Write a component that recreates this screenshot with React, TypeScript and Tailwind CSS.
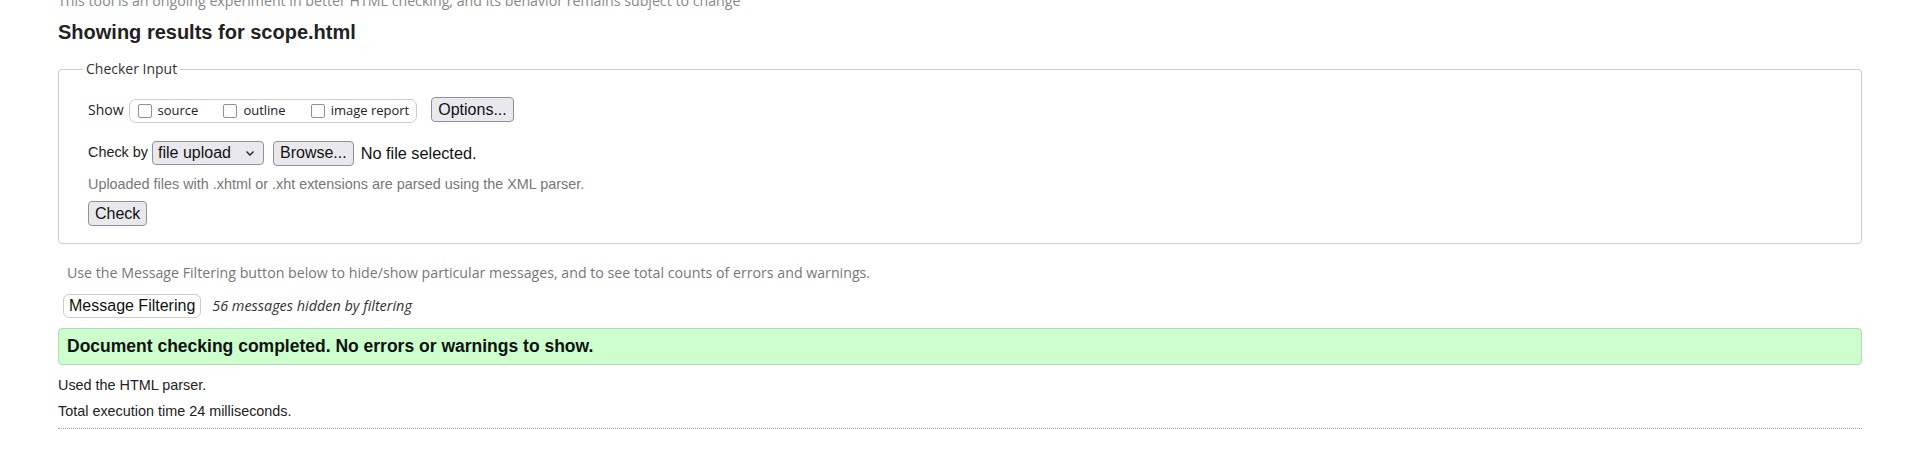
import React from 'react';

const sans = "font-['Liberation_Sans',Arial,sans-serif]";
const ui = "font-['Open_Sans','Noto_Sans',sans-serif]";

function Chevron() {
  return (
    <svg width="10" height="10" viewBox="0 0 10 10" className="ml-[14px]">
      <path d="M1.5 3.5 L5 7 L8.5 3.5" fill="none" stroke="#222" strokeWidth="1.4" />
    </svg>
  );
}

function Box({ label }: { label: string }) {
  return (
    <label className="flex items-center">
      <input
        type="checkbox"
        className="h-[14px] w-[14px] appearance-none rounded-[2px] border border-[#8f8f9d] bg-white"
      />
      <span className={`ml-[6px] text-[13px] text-[#222] ${ui}`}>{label}</span>
    </label>
  );
}

const ffButton =
  'h-[25px] rounded-[4px] border border-[#8f8f9d] bg-[#e9e9ed] px-[6px] text-[16px] leading-none text-[#111]';

export default function App() {
  return (
    <div className={`h-[456px] w-[1920px] overflow-hidden bg-white px-[58px] text-[#222] ${sans}`}>
      <p className={`mt-[-9px] h-[20px] whitespace-nowrap text-[14.2px] leading-[20px] text-[#888] ${ui}`}>
        This tool is an ongoing experiment in better HTML checking, and its behavior remains subject to change
      </p>

      <h2 className="mt-[9px] text-[20px] font-bold leading-[24px] text-[#222]">Showing results for scope.html</h2>

      {/* Checker Input */}
      <fieldset className="mt-[15px] rounded-[4px] border border-[#ccc] pb-[17px] pl-[29px]">
        <legend className={`ml-[-5px] px-[3px] text-[14px] leading-[20px] text-[#333] ${ui}`}>Checker Input</legend>

        <div className="mt-[17px] flex h-[27px] items-center">
          <span className={`text-[14px] text-[#222] ${ui}`}>Show</span>
          <div className="ml-[5px] mt-[2px] flex h-[24px] items-center gap-[25px] rounded-[7px] border border-[#ccc] pl-[8px] pr-[7px]">
            <Box label="source" />
            <Box label="outline" />
            <Box label="image report" />
          </div>
          <button className={`ml-[14px] ${ffButton}`}>Options...</button>
        </div>

        <div className="mt-[17px] flex h-[26px] items-center">
          <span className="text-[14.4px]">Check by</span>
          <div className="ml-[4px] flex h-[24px] w-[112px] items-center rounded-[4px] border border-[#8f8f9d] bg-[#e9e9ed] pl-[5px] text-[16px] text-[#111]">
            file upload
            <Chevron />
          </div>
          <button className={`ml-[9px] ${ffButton}`}>Browse...</button>
          <span className="ml-[7px] text-[16.3px] text-[#111]">No file selected.</span>
        </div>

        <p className="mt-[8px] text-[14.4px] leading-[20px] text-[#777]">
          Uploaded files with .xhtml or .xht extensions are parsed using the XML parser.
        </p>

        <button className={`mt-[7px] ${ffButton}`}>Check</button>
      </fieldset>

      {/* Message filtering */}
      <div className="pl-[5px]">
        <p className={`mt-[19px] pl-[4px] text-[14.2px] leading-[20px] text-[#777] ${ui}`}>
          Use the Message Filtering button below to hide/show particular messages, and to see total counts of errors and warnings.
        </p>
        <div className="mt-[11px] flex items-center">
          <button className="h-[24px] rounded-[6px] border border-[#ccc] bg-white px-[5px] text-[16px] leading-none text-[#111]">
            Message Filtering
          </button>
          <span className={`ml-[11px] text-[14.4px] italic text-[#333] ${ui}`}>56 messages hidden by filtering</span>
        </div>
      </div>

      <div className="mt-[10px] flex h-[37px] items-center rounded-[4px] border border-[#b8d6b8] bg-[#ccffcc] pl-[8px] text-[17.5px] font-bold text-[#111]">
        Document checking completed. No errors or warnings to show.
      </div>

      <p className="mt-[10px] text-[14.4px] leading-[20px]">Used the HTML parser.</p>
      <p className="mt-[6px] text-[14.4px] leading-[20px]">Total execution time 24 milliseconds.</p>

      <hr className="mt-[7px] border-0 border-t border-dotted border-[#999]" />
    </div>
  );
}
